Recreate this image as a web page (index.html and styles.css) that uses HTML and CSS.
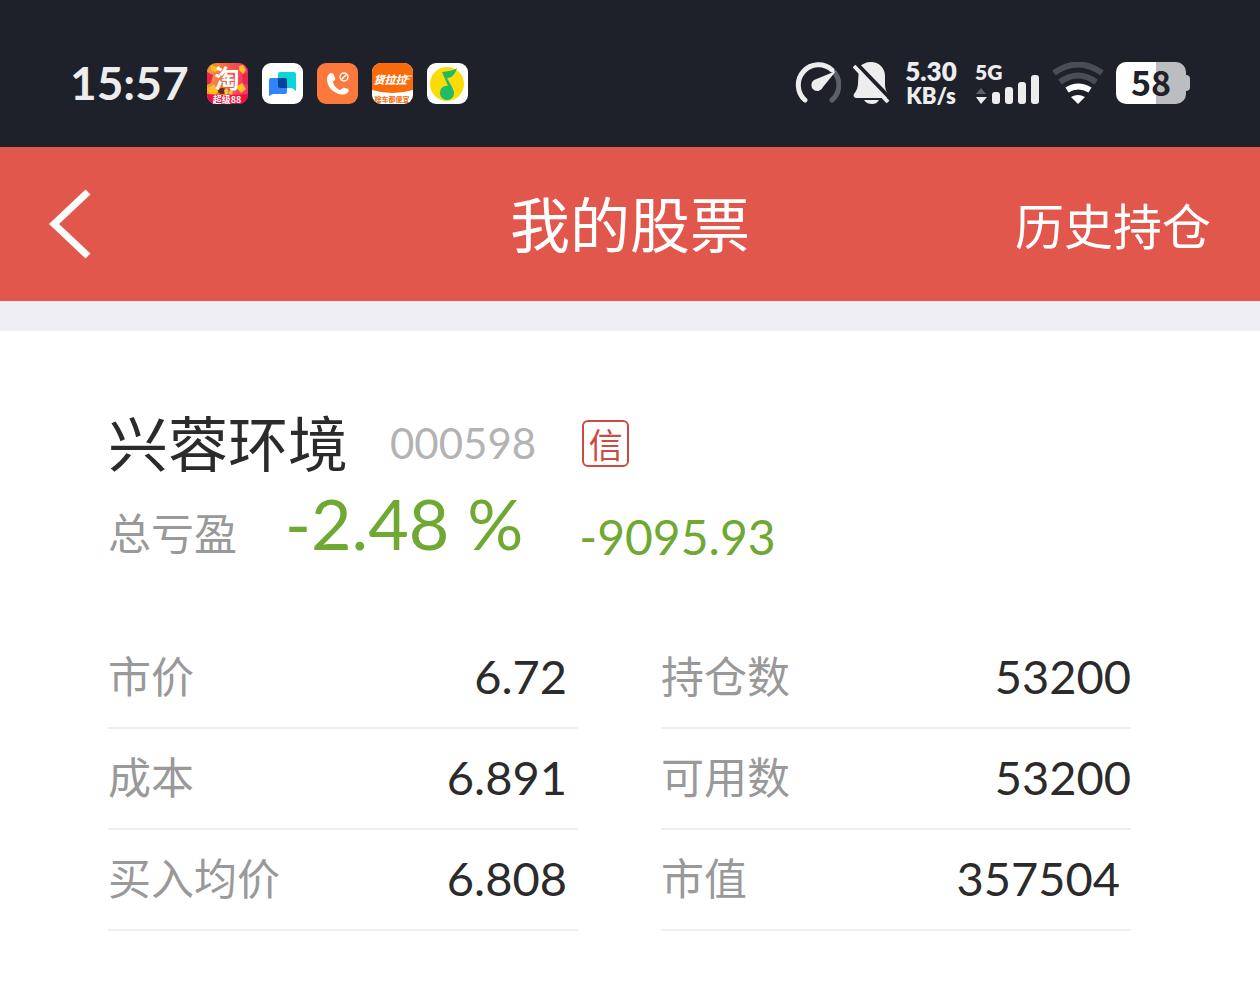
FILE: index.html
```html
<!DOCTYPE html>
<html lang="zh-CN">
<head>
  <meta charset="UTF-8">
  <meta name="viewport" content="width=device-width, initial-scale=1.0">
  <title>我的股票</title>
  <link rel="stylesheet" href="styles.css">
</head>
<body>

<div class="status-bar">
  <div class="status-left">
    <span class="clock">15:57</span>
    <svg class="app-icon" viewBox="0 0 41 41">
      <defs>
        <linearGradient id="taoBg" x1="0" y1="0" x2="1" y2="0">
          <stop offset="0" stop-color="#f39a45"/>
          <stop offset="0.5" stop-color="#f2603f"/>
          <stop offset="1" stop-color="#f5307c"/>
        </linearGradient>
        <clipPath id="round"><rect width="41" height="41" rx="9"/></clipPath>
      </defs>
      <g clip-path="url(#round)">
        <rect width="41" height="41" fill="url(#taoBg)"/>
        <path d="M4 2l5 2 4-2-1 5-4 2-4-2zM32 3l4-1 3 5-3 4-4-4zM0 26l7-5 4 8-6 4zM29 24l6-4 4 6-5 4z" fill="#ffc21c"/>
        <path d="M0 9l6 3-2 8-4 2zM35 12l6-3v13l-5-2z" fill="#e8264a"/>
        <ellipse cx="15" cy="28" rx="4" ry="3" fill="#6b2a16"/>
        <path d="M17 27l3-2 2 5-4 2zM23 27l3 1-1 4-3-1z" fill="#f9c63a"/>
        <path d="M0 31Q20 33 41 31V41H0z" fill="#f0103f"/>
      </g>
      <text x="20" y="25" class="tao-char">淘</text>
      <text x="20" y="40" class="tao-tag">超级88</text>
    </svg>
    <svg class="app-icon" viewBox="0 0 41 41">
      <rect width="41" height="41" rx="9" fill="#fff"/>
      <path d="M18 9h14a2 2 0 0 1 2 2v17l-4-3H18a2 2 0 0 1-2-2V11a2 2 0 0 1 2-2z" fill="#0bd6d6"/>
      <path d="M9 15h14a2 2 0 0 1 2 2v12a2 2 0 0 1-2 2H11l-4 2V17a2 2 0 0 1 2-2z" fill="#2f86fb"/>
      <path d="M16 15h7a2 2 0 0 1 2 2v8h-7a2 2 0 0 1-2-2z" fill="#06429c"/>
    </svg>
    <svg class="app-icon" viewBox="0 0 41 41">
      <rect width="41" height="41" rx="9" fill="#fd783c"/>
      <path d="M12 11c2-2 4-1 5 1l1 3c1 2-2 3-2 4 0 3 4 7 7 8 2 0 2-3 5-2l3 1c1 1 1 2 0 3-2 3-6 3-9 2-7-2-12-8-12-15 0-2 1-4 2-5z" fill="#fff"/>
      <circle cx="27" cy="14" r="4" fill="none" stroke="#fff" stroke-width="1.400"/>
      <path d="M24 17l6-6" stroke="#fff" stroke-width="1.400"/>
    </svg>
    <svg class="app-icon" viewBox="0 0 41 41">
      <g clip-path="url(#round)">
        <rect width="41" height="41" fill="#fff"/>
        <path d="M0 0H41V27Q20 33 0 27z" fill="#f96a0b"/>
      </g>
      <text x="18" y="21" class="hll-char">货拉拉</text>
      <path d="M34 13h6M34 16h4" stroke="#fff" stroke-width="1"/>
      <text x="20" y="39" class="hll-tag">啥车都便宜</text>
    </svg>
    <svg class="app-icon" viewBox="0 0 41 41">
      <rect width="41" height="41" rx="9" fill="#fff"/>
      <circle cx="20" cy="21" r="17" fill="#fddc06"/>
      <path d="M30 5c-4 3-9 3-15 4l6 14c-4-1-8 2-8 7 0 4 3 7 7 7s7-3 7-7c0-2-1-4-2-6l-5-9c4 0 8-3 10-10z" fill="#20bb66"/>
    </svg>
  </div>

  <div class="status-right">
    <svg class="gauge" viewBox="0 0 46 42">
      <path d="M37 38A20 20 0 0 0 40 11" fill="none" stroke="#5e6069" stroke-width="5" stroke-linecap="round"/>
      <path d="M10 38A20 20 0 0 1 37 8" fill="none" stroke="#ededee" stroke-width="5" stroke-linecap="round"/>
      <path d="M41 9L28 25a6 6 0 1 1-9-7z" fill="#ededee"/>
    </svg>
    <svg class="bell" viewBox="0 0 37 42">
      <path d="M6 5C9 2 13 0 18 0c8 0 14 6 14 14v9c0 3 1 6 3 9v4H4c-3 0-4-2-3-4 3-4 4-7 4-11z" fill="#ededee"/>
      <path d="M11 38H26c-2 3-4 4-7 4s-6-1-8-4z" fill="#ededee"/>
      <path d="M3 1L37 36" stroke="#1e212a" stroke-width="4"/>
      <path d="M1 4L35 40" stroke="#ededee" stroke-width="4"/>
    </svg>
    <div class="net-speed">
      <span>5.30</span>
      <span class="unit">KB/s</span>
    </div>
    <div class="signal">
      <span>5G</span>
      <svg class="signal-bars" viewBox="0 0 65 30">
        <path d="M1 20L6 14 11 20z" fill="#5e6069"/>
        <path d="M1 23H12L6 30z" fill="#ededee"/>
        <g fill="#ededee">
          <rect x="17" y="18" width="8" height="12" rx="3"/>
          <rect x="30" y="13" width="8" height="17" rx="3"/>
          <rect x="43" y="8" width="8" height="22" rx="3"/>
          <rect x="56" y="1" width="8" height="29" rx="3"/>
        </g>
      </svg>
    </div>
    <svg class="wifi" viewBox="0 0 52 42">
      <g fill="none" stroke-width="6">
        <path d="M2 11Q26-6 50 11" stroke="#4b4d56"/>
        <path d="M8 20Q26 7 44 20" stroke="#4b4d56"/>
        <path d="M15 28Q26 21 38 28" stroke="#fff"/>
      </g>
      <path d="M19 35Q26 31 33 35L26 42z" fill="#fff"/>
    </svg>
    <div class="battery"><span>58</span></div>
  </div>
</div>

<header class="nav-bar">
  <button class="back" aria-label="返回">
    <svg viewBox="0 0 42 70"><path d="M39 3L5 35L39 67" fill="none" stroke="#fff" stroke-width="7"/></svg>
  </button>
  <h1>我的股票</h1>
  <a class="history" href="#">历史持仓</a>
</header>

<main class="holding">
  <div class="stock">
    <h2>兴蓉环境</h2>
    <span class="code">000598</span>
    <span class="credit">信</span>
  </div>
  <div class="profit">
    <span class="profit-label">总亏盈</span>
    <span class="rate">-2.48 %</span>
    <span class="amount">-9095.93</span>
  </div>

  <div class="details">
    <dl>
      <div class="row inset"><dt>市价</dt><dd>6.72</dd></div>
      <div class="row inset"><dt>成本</dt><dd>6.891</dd></div>
      <div class="row inset"><dt>买入均价</dt><dd>6.808</dd></div>
    </dl>
    <dl>
      <div class="row"><dt>持仓数</dt><dd>53200</dd></div>
      <div class="row"><dt>可用数</dt><dd>53200</dd></div>
      <div class="row inset"><dt>市值</dt><dd>357504</dd></div>
    </dl>
  </div>
</main>

</body>
</html>
```
FILE: styles.css
```css
* {
  box-sizing: border-box;
}
body {
  margin: 0;
  background: #fff;
  color: #2b2b2b;
  font-family: Lato, "Noto Sans CJK SC", sans-serif;
}
h1, h2, dl, dd {
  margin: 0;
  font-weight: 400;
}

/* status bar */
.status-bar {
  display: flex;
  justify-content: space-between;
  align-items: center;
  height: 147px;
  padding: 19px 70px 0;
  background: #1e212a;
  color: #ededee;
}
.status-left {
  display: flex;
  align-items: center;
  gap: 14px;
}
.clock {
  margin-right: 4px;
  font-size: 46px;
  font-weight: 700;
  line-height: 48px;
}
.app-icon {
  width: 41px;
  height: 41px;
  overflow: visible;
}
.app-icon text {
  font-family: "Noto Sans CJK SC", sans-serif;
  text-anchor: middle;
  font-weight: 700;
  fill: #fff;
}
.app-icon .tao-char {
  font-size: 25px;
}
.app-icon .tao-tag {
  font-size: 9px;
}
.app-icon .hll-char {
  font-size: 11px;
  font-style: italic;
  font-weight: 900;
}
.app-icon .hll-tag {
  font-size: 7px;
  fill: #f96a0b;
}
.status-right {
  display: flex;
  align-items: center;
  gap: 12px;
}
.gauge {
  width: 46px;
  height: 42px;
}
.bell {
  width: 37px;
  height: 42px;
}
.net-speed {
  display: flex;
  flex-direction: column;
  align-items: center;
  width: 58px;
  margin-right: 3px;
  font-size: 26px;
  font-weight: 800;
  line-height: 25px;
}
.net-speed .unit {
  font-size: 22px;
  line-height: 24px;
}
.signal {
  display: flex;
  flex-direction: column;
  width: 65px;
  font-size: 21px;
  font-weight: 800;
  line-height: 20px;
}
.signal-bars {
  width: 65px;
  height: 30px;
  margin-top: -8px;
}
.wifi {
  width: 52px;
  height: 42px;
}
.battery {
  display: flex;
  align-items: center;
  width: 74px;
}
.battery span {
  width: 70px;
  height: 42px;
  border-radius: 10px;
  background: linear-gradient(to right, #fff 40px, #bcbdc0 40px);
  color: #1e212a;
  font-family: "Noto Sans CJK SC", sans-serif;
  font-size: 34px;
  font-weight: 700;
  line-height: 40px;
  text-align: center;
}
.battery::after {
  content: "";
  width: 4px;
  height: 16px;
  border-radius: 0 4px 4px 0;
  background: #bcbdc0;
}

/* title bar */
.nav-bar {
  display: grid;
  grid-template-columns: 1fr auto 1fr;
  align-items: center;
  height: 154px;
  padding: 0 49px;
  background: #e2574c;
  color: #fff;
}
.back {
  width: 42px;
  height: 70px;
  padding: 0;
  border: none;
  background: none;
  cursor: pointer;
}
.back svg {
  display: block;
  width: 42px;
  height: 70px;
}
.nav-bar h1 {
  font-family: "Noto Sans CJK SC", sans-serif;
  font-size: 60px;
  line-height: 76px;
  padding-bottom: 4px;
}
.history {
  justify-self: end;
  color: #fff;
  font-family: "Noto Sans CJK SC", sans-serif;
  font-size: 49px;
  line-height: 70px;
  text-decoration: none;
}

/* holding */
.holding {
  padding: 72px 129px 50px 108px;
  border-top: 30px solid #efeef4;
}
.stock {
  display: flex;
  align-items: center;
}
.stock h2 {
  font-family: "Noto Sans CJK SC", sans-serif;
  font-size: 60px;
  line-height: 76px;
  padding-bottom: 4px;
}
.code {
  margin-left: 42px;
  color: #b3b3b3;
  font-size: 42px;
  line-height: 80px;
}
.credit {
  width: 47px;
  height: 47px;
  margin-left: 46px;
  border: 2px solid #cb4a44;
  border-radius: 6px;
  color: #cb4a44;
  font-family: "Noto Sans CJK SC", sans-serif;
  font-size: 34px;
  line-height: 44px;
  text-align: center;
}
.profit {
  display: flex;
  align-items: baseline;
  height: 80px;
  color: #6fa832;
}
.profit-label {
  color: #999;
  font-size: 43px;
}
.rate {
  margin-left: 48px;
  font-size: 70px;
  line-height: 80px;
}
.amount {
  align-self: flex-end;
  margin-left: 56px;
  font-size: 48px;
  line-height: 52px;
}
.details {
  display: grid;
  grid-template-columns: 1fr 1fr;
  gap: 83px;
  margin-top: 65px;
}
.row {
  display: flex;
  justify-content: space-between;
  align-items: center;
  height: 101px;
  padding-bottom: 4px;
  border-bottom: 2px solid #efefef;
}
.row dt {
  padding-bottom: 4px;
  color: #999;
  font-size: 43px;
}
.row dd {
  font-size: 47px;
}
.inset dd {
  padding-right: 11px;
}
```
